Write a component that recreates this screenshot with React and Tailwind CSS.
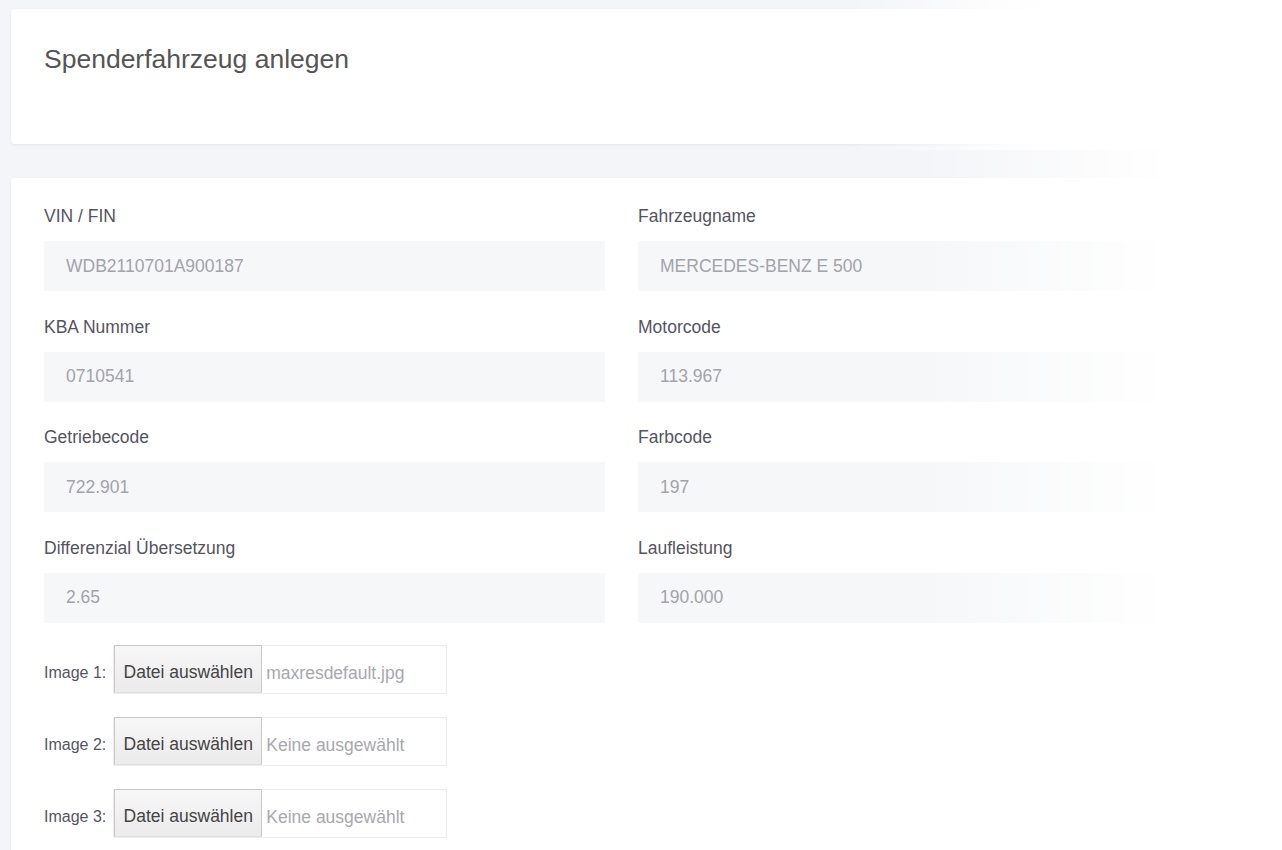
import React from "react";

const fields = [
  { label: "VIN / FIN", value: "WDB2110701A900187" },
  { label: "Fahrzeugname", value: "MERCEDES-BENZ E 500" },
  { label: "KBA Nummer", value: "0710541" },
  { label: "Motorcode", value: "113.967" },
  { label: "Getriebecode", value: "722.901" },
  { label: "Farbcode", value: "197" },
  { label: "Differenzial Übersetzung", value: "2.65" },
  { label: "Laufleistung", value: "190.000" },
];

const images = [
  { label: "Image 1:", file: "maxresdefault.jpg" },
  { label: "Image 2:", file: "Keine ausgewählt" },
  { label: "Image 3:", file: "Keine ausgewählt" },
];

const Field = ({ label, value }) => (
  <div className="flex flex-col">
    <label className="h-6 leading-6 text-[17.5px] text-[#555560] mb-[13px]">{label}</label>
    <input
      type="text"
      readOnly
      value={value}
      className="h-[50px] w-full px-[22px] bg-[#f6f7f9] text-[17.5px] text-[#a3a3aa] outline-none"
    />
  </div>
);

const FileRow = ({ label, file }) => (
  <div className="flex items-center">
    <span className="pt-[8px] text-[16px] text-[#555560] mr-[7px]">{label}</span>
    <div className="flex items-center h-[49px] w-[334px] border border-[#ececee]">
      <button className="h-[48px] w-[148px] pt-[7px] border border-[#c8c8c8] border-b-[#e0e0e0] bg-gradient-to-b from-[#f7f7f7] to-[#ebebeb] text-[17.5px] text-[#444] whitespace-nowrap">
        Datei auswählen
      </button>
      <span className="pt-[8px] ml-[4px] text-[17.5px] text-[#a8a8ae] whitespace-nowrap">{file}</span>
    </div>
  </div>
);

export default function App() {
  return (
    <div
      className="relative min-h-[850px] bg-[#f4f5f8] px-[11px] pt-[9px] overflow-hidden"
      style={{ fontFamily: '"Liberation Sans", Arial, sans-serif' }}
    >
      <div className="h-[135px] bg-white rounded-[4px] shadow-[0_1px_3px_rgba(0,0,0,0.07)] px-[33px] pt-[35px]">
        <h1 className="text-[26.5px] leading-[31px] text-[#555]">Spenderfahrzeug anlegen</h1>
      </div>

      <div className="mt-[34px] bg-white rounded-[4px] shadow-[0_1px_3px_rgba(0,0,0,0.07)] px-[33px] pt-[26px] pb-[20px]">
        <div className="grid grid-cols-[561px_561px] gap-x-[33px] gap-y-[23.5px]">
          {fields.map((f) => (
            <Field key={f.label} label={f.label} value={f.value} />
          ))}
        </div>

        <div className="mt-[22px] flex flex-col gap-[23px]">
          {images.map((img) => (
            <FileRow key={img.label} label={img.label} file={img.file} />
          ))}
        </div>
      </div>

      {/* white fade over the right edge */}
      <div className="pointer-events-none absolute inset-0 bg-[linear-gradient(to_right,transparent_920px,white_1170px)]" />
      <div className="pointer-events-none absolute left-0 right-0 top-0 h-[150px] bg-[linear-gradient(to_right,transparent_850px,white_1060px)]" />
    </div>
  );
}
